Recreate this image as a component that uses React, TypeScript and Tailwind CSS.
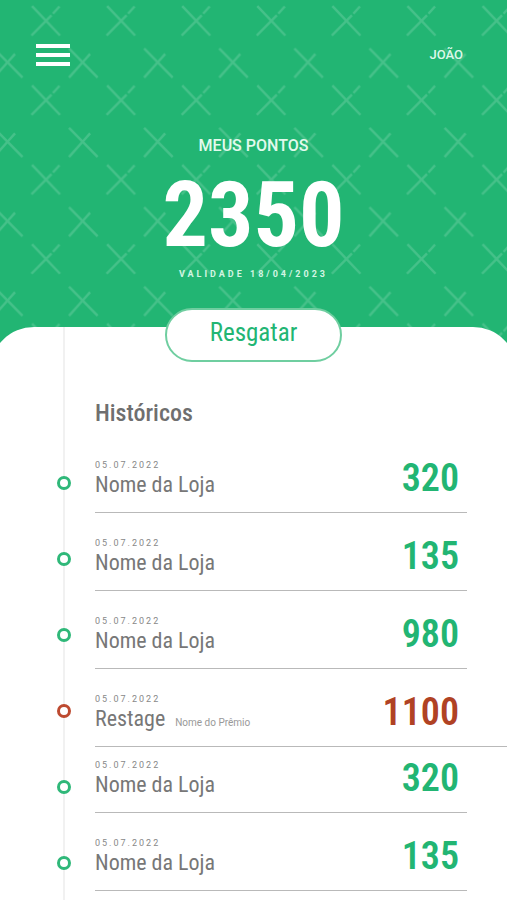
import { clsx } from "clsx";

const entries = [
  { title: "Nome da Loja", date: "05.07.2022", points: 320 },
  { title: "Nome da Loja", date: "05.07.2022", points: 135 },
  { title: "Nome da Loja", date: "05.07.2022", points: 980 },
  { title: "Restage", note: "Nome do Prêmio", date: "05.07.2022", points: 1100, redeemed: true },
  { title: "Nome da Loja", date: "05.07.2022", points: 320, tight: true },
  { title: "Nome da Loja", date: "05.07.2022", points: 135 },
];

function CrossPattern() {
  return (
    <svg aria-hidden="true" className="absolute inset-0 h-full w-full">
      <defs>
        <pattern id="crosses" x="8" y="0" width="75.1" height="79.4" patternUnits="userSpaceOnUse">
          <g stroke="#fff" strokeOpacity="0.16" strokeWidth="2.4" fill="none">
            <path d="M24 6 52 35.5M23.5 35.5 43.5 15.2M45 13.7 51.5 6.5" />
            <path d="M-14 48.5 14.5 77.5M-14 77.5 7 54" />
            <path d="M61.1 48.5 89.6 77.5M61.1 77.5 82.1 54" />
          </g>
        </pattern>
      </defs>
      <rect width="100%" height="100%" fill="url(#crosses)" />
    </svg>
  );
}

function Timeline() {
  return (
    <div aria-hidden="true" className="relative flex w-4 flex-col items-center gap-[62px] pt-[149px]">
      <div className="absolute inset-y-0 left-[7px] w-0.5 bg-[#f1f1f1]" />
      {entries.map((entry, i) => (
        <span
          key={i}
          className={clsx(
            "relative h-3.5 w-3.5 shrink-0 rounded-full border-[3px] bg-white",
            entry.redeemed ? "border-[#bd4a30]" : "border-[#2fb879]"
          )}
        />
      ))}
    </div>
  );
}

export default function App() {
  return (
    <main className="relative min-h-screen overflow-hidden bg-white font-['Roboto_Condensed','Roboto',sans-serif]">
      <header className="relative bg-[#22b573] pb-[45px] text-white">
        <CrossPattern />
        <div className="relative flex items-center justify-between pt-[39px] pr-11 pl-9">
          <button type="button" aria-label="Menu" className="flex h-8 w-[34px] flex-col justify-center gap-[5px]">
            <span className="h-1 w-full bg-white" />
            <span className="h-1 w-full bg-white" />
            <span className="h-1 w-full bg-white" />
          </button>
          <span className="font-['Roboto',sans-serif] text-[13px] font-medium text-[#dcf8e9]">JOÃO</span>
        </div>
        <div className="relative flex flex-col items-center pt-[65px] text-center">
          <h1 className="font-['Roboto',sans-serif] text-base leading-5 font-medium text-[#e2faed]">MEUS PONTOS</h1>
          <p className="pt-3 text-[90px] leading-[96px] font-bold">2350</p>
          <p className="pt-1 font-['Roboto',sans-serif] text-[9px] leading-3 font-bold tracking-[3px] text-[#d3f5e3]">
            VALIDADE 18/04/2023
          </p>
          <button
            type="button"
            className="relative z-10 mt-7 h-[54px] w-[177px] rounded-full border-2 border-[#6fcea0] bg-white pb-1 text-[25px] text-[#22b573]"
          >
            Resgatar
          </button>
        </div>
      </header>

      <section className="relative -mx-2.5 -mt-20 rounded-t-[44px] bg-white px-2.5">
        <div className="flex pl-14">
          <Timeline />
          <div className="min-w-0 flex-1 pt-[72px] pb-2.5 pl-[23px]">
            <h2 className="text-2xl leading-7 font-medium text-[#6f6f6f]">Históricos</h2>
            <ul className="pt-2">
              {entries.map((entry, i) => (
                <li
                  key={i}
                  className={clsx(
                    "flex items-start justify-between border-b border-[#b9b9b9]",
                    entry.tight ? "pt-3" : "pt-6",
                    entry.redeemed ? "pr-12" : "mr-10 pr-2"
                  )}
                >
                  <div className="pb-[13px]">
                    <p className="font-['Roboto',sans-serif] text-[9px] leading-3 tracking-[2px] text-[#888]">
                      {entry.date}
                    </p>
                    <div className="flex items-baseline gap-2.5">
                      <h3 className="text-[22px] leading-7 text-[#777]">{entry.title}</h3>
                      {entry.note && (
                        <p className="font-['Roboto',sans-serif] text-[10px] leading-3 text-[#999]">{entry.note}</p>
                      )}
                    </div>
                  </div>
                  <p
                    className={clsx(
                      "text-[38px] leading-[38px] font-semibold",
                      entry.redeemed ? "text-[#b04224]" : "text-[#22b573]"
                    )}
                  >
                    {entry.points}
                  </p>
                </li>
              ))}
            </ul>
          </div>
        </div>
      </section>
    </main>
  );
}
